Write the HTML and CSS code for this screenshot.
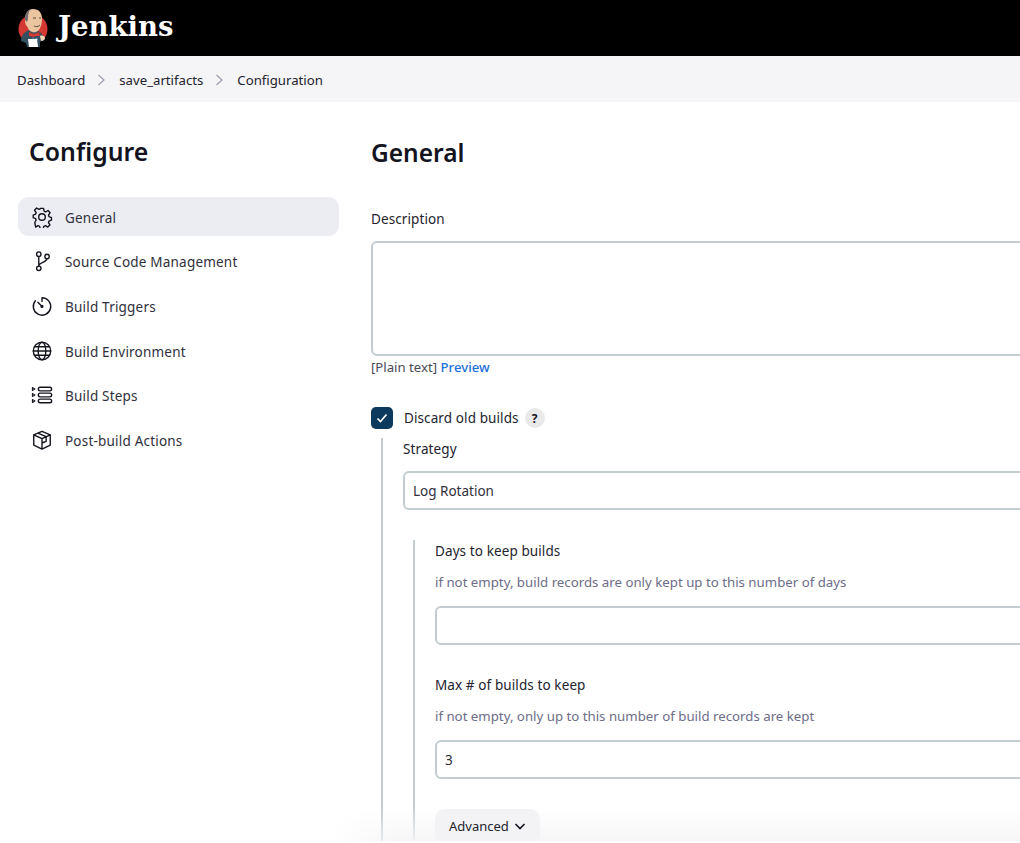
FILE: index.html
```html
<!DOCTYPE html>
<html lang="en">
<head>
    <meta charset="UTF-8">
    <meta name="viewport" content="width=device-width, initial-scale=1.0">
    <title>save_artifacts Config - Jenkins</title>
    <link rel="stylesheet" href="styles.css">
</head>
<body>
    <header class="page-header">
        <svg class="logo" width="30" height="40" viewBox="0 0 30 40">
            <circle cx="15" cy="21" r="14.5" fill="#d33833"/>
            <path d="M3 33c0-6 4-10 9-11l8 1c4 2 6 5 5 9l-3 2v5H9l-1-4z" fill="#335061"/>
            <path d="M7 12C7 5 10 1 15 1c6 0 9 4 9 10 0 4-1 8-3 11-2 2-5 3-7 2-3-1-4-4-5-6-1 0-2-3-2-6z" fill="#eac5a0"/>
            <path d="M7 12C7 6 9 3 12 2c-2 3-2 6-2 9l-1 3z" fill="#6d6b6d"/>
            <path d="M15 10h3m3 0h2M16 18c2 1 4 1 6-1" stroke="#5a4a42" stroke-width="1" fill="none"/>
            <path d="M11 24l5 2 5-2 1 4-4 0-2 1-5-1z" fill="#d33833"/>
            <path d="M14 29l2 2 3-1 1 2-4 1z" fill="#81b0c4"/>
            <path d="M10 31h9l1 8H11z" fill="#fff"/>
            <path d="M22 28c2-1 5 0 5 2 0 2-2 3-4 3z" fill="#f0d6b7"/>
        </svg>
        <span class="brand">Jenkins</span>
    </header>

    <nav class="breadcrumbs">
        <a>Dashboard</a>
        <svg class="crumb-sep" width="10" height="12" viewBox="0 0 10 12"><path d="M1.500 1l5.500 5-5.500 5"/></svg>
        <a>save_artifacts</a>
        <svg class="crumb-sep" width="10" height="12" viewBox="0 0 10 12"><path d="M1.500 1l5.500 5-5.500 5"/></svg>
        <a>Configuration</a>
    </nav>

    <div class="page-body">
        <aside class="sidebar">
            <h1>Configure</h1>
            <ul class="tasks">
                <li class="task active">
                    <svg class="task-icon" viewBox="0 0 24 24"><path d="M10.300 2.600h3.400l.6 2.900 1.700.8 2.600-1.400 2.200 2.500-1.700 2.400.5 1.800 2.700 1v2.800l-2.700 1-.5 1.800 1.500 2.500-2.300 2.300-2.500-1.500-1.800.7-.7 2.700h-3.200l-.7-2.700-1.800-.7-2.500 1.500L4.100 18l1.500-2.500-.6-1.800-2.600-1v-2.800l2.700-1 .5-1.800-1.700-2.400 2.200-2.500 2.600 1.400 1.700-.8z"/><circle cx="12" cy="12" r="3.600"/></svg>
                    <span>General</span>
                </li>
                <li class="task">
                    <svg class="task-icon" viewBox="0 0 24 24"><circle cx="8.500" cy="4.500" r="2.400"/><circle cx="8.500" cy="20" r="2.400"/><circle cx="17.500" cy="7" r="2.400"/><path d="M8.500 7v10.500M17.500 9.400c0 4.500-9 3.600-9 8.100"/></svg>
                    <span>Source Code Management</span>
                </li>
                <li class="task">
                    <svg class="task-icon" viewBox="0 0 24 24"><path d="M12 3a9.500 9.500 0 1 1-7.200 3.300M12 3v4M12 12.500L7.500 8"/><circle cx="12" cy="12.500" r="1"/></svg>
                    <span>Build Triggers</span>
                </li>
                <li class="task">
                    <svg class="task-icon" viewBox="0 0 24 24"><circle cx="12" cy="12" r="9.500"/><ellipse cx="12" cy="12" rx="4.200" ry="9.500"/><path d="M2.500 12h19M3.800 7.300h16.400M3.800 16.700h16.400"/></svg>
                    <span>Build Environment</span>
                </li>
                <li class="task">
                    <svg class="task-icon" viewBox="0 0 24 24"><rect x="8" y="3.500" width="14.500" height="4" rx="2"/><rect x="8" y="10" width="14.500" height="4" rx="2"/><rect x="8" y="16.500" width="14.500" height="4" rx="2"/><path class="small-stroke" d="M1.500 3.800l2.800 1.700-2.800 1.700zM1.500 10.300l2.800 1.700-2.800 1.700zM1.500 16.800l2.800 1.700-2.800 1.700z"/></svg>
                    <span>Build Steps</span>
                </li>
                <li class="task">
                    <svg class="task-icon" viewBox="0 0 24 24"><path d="M12 2.500l9 3.800v11.200l-9 4.500-9-4.500V6.300zM3 6.300l9 4.200 9-4.200M12 10.500V22M7.500 4.400l9 4v5.100l-4 1.500"/></svg>
                    <span>Post-build Actions</span>
                </li>
            </ul>
        </aside>

        <main class="config">
            <h2>General</h2>

            <label class="field-label desc-label">Description</label>
            <div class="textarea"></div>
            <p class="format-line">[Plain text] <a class="preview">Preview</a></p>

            <div class="check-row">
                <span class="checkbox">
                    <svg width="14" height="14" viewBox="0 0 14 14"><path d="M2.500 7.500l3 3 6-7"/></svg>
                </span>
                <span class="check-label">Discard old builds</span>
                <span class="help-badge">?</span>
            </div>

            <section class="nested outer">
                <label class="field-label">Strategy</label>
                <div class="input select">Log Rotation</div>

                <section class="nested inner">
                    <label class="field-label">Days to keep builds</label>
                    <p class="hint">if not empty, build records are only kept up to this number of days</p>
                    <div class="input"></div>

                    <label class="field-label second">Max # of builds to keep</label>
                    <p class="hint">if not empty, only up to this number of build records are kept</p>
                    <div class="input">3</div>

                    <button class="advanced">
                        Advanced
                        <svg width="14" height="14" viewBox="0 0 14 14"><path d="M2.500 5l4.500 4.500L11.500 5"/></svg>
                    </button>
                </section>
            </section>
        </main>
    </div>

    <div class="bottom-fade"></div>
</body>
</html>
```

FILE: styles.css
```css
html {
    background-color: white;
    overflow: hidden;
}
body {
    position: relative;
    height: 841px;
    margin: 0;
    overflow: hidden;
    font-family: "Noto Sans", "Open Sans", Arial, sans-serif;
    font-size: 13.5px;
    color: #14141f;
    background-color: white;
}
.page-header {
    display: flex;
    align-items: center;
    height: 56px;
    padding-left: 18px;
    background-color: black;
}
.logo {
    flex: none;
}
.brand {
    margin-left: 10px;
    margin-top: -4px;
    font-family: "DejaVu Serif", serif;
    font-size: 27.500px;
    font-weight: bold;
    color: white;
}
.breadcrumbs {
    display: flex;
    align-items: center;
    height: 46px;
    padding: 2px 0 0 17px;
    box-sizing: border-box;
    background-color: #f5f5f7;
    font-size: 13.2px;
    color: #23232e;
}
.crumb-sep {
    margin: 0 12px;
}
.crumb-sep path {
    fill: none;
    stroke: #9c9cb0;
    stroke-width: 1.2;
}
.page-body {
    display: flex;
}
.sidebar {
    flex: none;
    width: 321px;
    margin-left: 18px;
}
.sidebar h1 {
    margin: 31px 0 28px 11px;
    font-size: 24.800px;
    line-height: 36px;
    font-weight: 600;
}
.tasks {
    display: flex;
    flex-direction: column;
    gap: 5.700px;
    margin: 0;
    padding: 0;
    list-style: none;
}
.task {
    display: flex;
    align-items: center;
    gap: 12px;
    height: 39px;
    padding-left: 13px;
    border-radius: 11px;
    letter-spacing: 0.2px;
    color: #30303c;
}
.task span {
    padding-top: 2px;
}
.task.active {
    background-color: #ecedf2;
}
.task-icon {
    flex: none;
    width: 22px;
    height: 22px;
    fill: none;
    stroke: #14141f;
    stroke-width: 1.500;
    stroke-linejoin: round;
    stroke-linecap: round;
}
.task-icon .small-stroke {
    stroke-width: 1.100;
}
.config {
    flex: none;
    width: 800px;
    margin-left: 32px;
}
.config h2 {
    margin: 33px 0 0;
    font-size: 24.500px;
    line-height: 36px;
    font-weight: 600;
}
.field-label {
    display: block;
    line-height: 20px;
    letter-spacing: 0.1px;
    color: #23232e;
}
.desc-label {
    margin-top: 38px;
}
.textarea {
    box-sizing: border-box;
    height: 115px;
    margin-top: 12px;
    border: 2px solid #c3ccd1;
    border-radius: 6px;
}
.format-line {
    margin: 1px 0 0;
    line-height: 20px;
    font-size: 13.2px;
    color: #4a4a57;
}
.preview {
    font-weight: 500;
    color: #1c6fd9;
}
.check-row {
    display: flex;
    align-items: center;
    height: 22px;
    margin-top: 30px;
}
.checkbox {
    display: flex;
    align-items: center;
    justify-content: center;
    width: 22px;
    height: 22px;
    border-radius: 5px;
    background-color: #0b3a5e;
}
.checkbox path {
    fill: none;
    stroke: white;
    stroke-width: 1.700;
}
.check-label {
    margin-left: 11px;
    letter-spacing: 0.1px;
    color: #23232e;
}
.help-badge {
    display: flex;
    align-items: center;
    justify-content: center;
    width: 20px;
    height: 20px;
    margin-left: 6px;
    border-radius: 50%;
    background-color: #e9e9e9;
    font-size: 12px;
    font-weight: 700;
}
.nested {
    border-left: 2px solid #c3ccd1;
}
.outer {
    margin: 9px 0 0 10px;
    padding: 1px 0 200px 20px;
}
.inner {
    margin: 30px 0 0 10px;
    padding: 1px 0 0 20px;
}
.input {
    box-sizing: border-box;
    height: 39px;
    padding-left: 8px;
    border: 2px solid #c3ccd1;
    border-radius: 6px;
    line-height: 37px;
    color: #30303c;
}
.select {
    margin-top: 12px;
}
.hint {
    margin: 11px 0 14px;
    line-height: 20px;
    font-size: 13.250px;
    color: #6d6d88;
}
.second {
    margin-top: 30px;
}
.advanced {
    position: relative;
    z-index: 1;
    display: flex;
    align-items: center;
    gap: 4px;
    height: 36px;
    margin-top: 30px;
    padding: 0 13px 2px 14px;
    border: none;
    border-radius: 10px;
    background-color: #f3f3f6;
    font: inherit;
    font-size: 13px;
    color: #23232e;
}
.advanced path {
    fill: none;
    stroke: #14141f;
    stroke-width: 1.600;
}
.bottom-fade {
    position: absolute;
    left: 330px;
    right: 0;
    bottom: 0;
    height: 34px;
    background: linear-gradient(to bottom, rgba(245, 245, 247, 0), rgba(245, 245, 247, 0.9));
    -webkit-mask-image: linear-gradient(to right, transparent, black 70px);
    mask-image: linear-gradient(to right, transparent, black 70px);
}
```
